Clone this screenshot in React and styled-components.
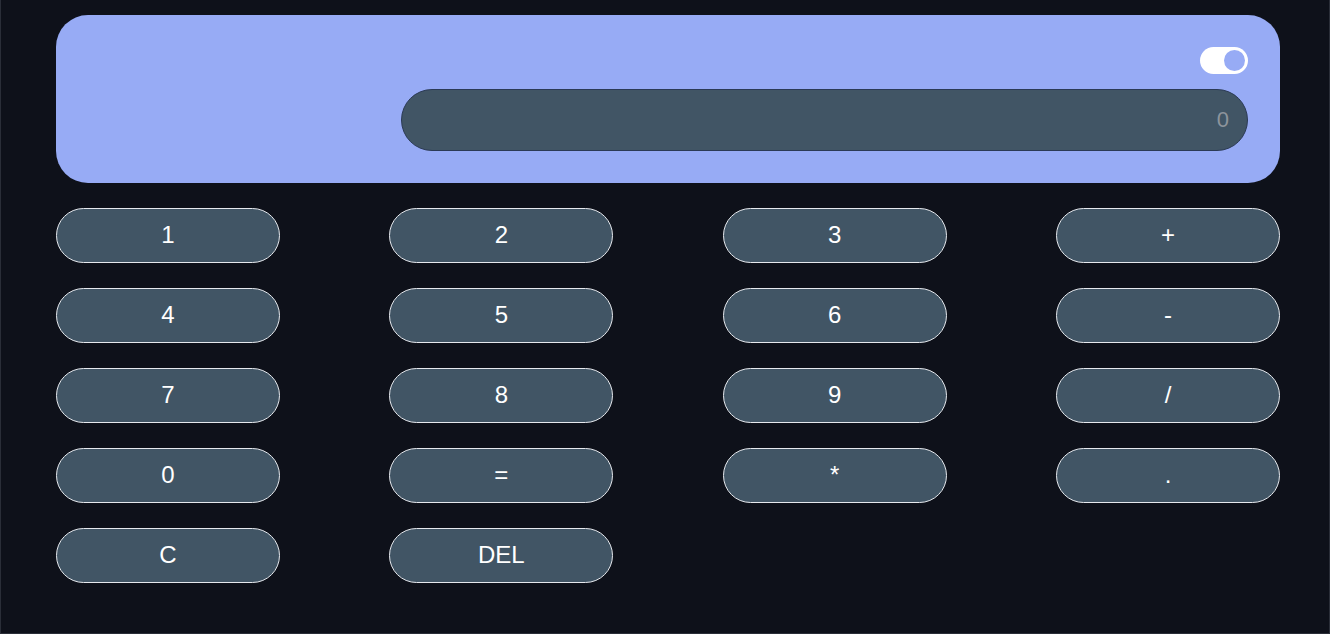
import styled, { createGlobalStyle } from "styled-components"

const GlobalStyle = createGlobalStyle`
    html, body {
        margin: 0;
        padding: 0;
        background: #0e111a;
        font-family: "Liberation Sans", Arial, sans-serif;
    }
`

const Page = styled.div`
    box-sizing: border-box;
    width: 1330px;
    height: 634px;
    padding: 15px 49px 0 55px;
    background: #0e111a;
    border: 1px solid #2a2e38;
    border-top: none;
`

const Calculator = styled.div`
    display: flex;
    flex-direction: column;
    gap: 25px;
    width: 1224px;
`

const Screen = styled.div`
    display: flex;
    flex-direction: column;
    align-items: flex-end;
    gap: 15px;
    box-sizing: border-box;
    height: 168px;
    padding: 32px 32px;
    border-radius: 32px;
    background: #97abf5;
`

const Toggle = styled.div`
    position: relative;
    width: 48px;
    height: 27px;
    border-radius: 14px;
    background: #ffffff;
    cursor: pointer;
`

const Knob = styled.span`
    position: absolute;
    top: 3px;
    right: 3px;
    width: 21px;
    height: 21px;
    border-radius: 50%;
    background: #97abf5;
`

const Display = styled.input`
    box-sizing: border-box;
    width: 847px;
    height: 62px;
    padding: 0 18px;
    border: 1px solid #2b3a55;
    border-radius: 31px;
    background: #415565;
    color: #8d949c;
    font-family: "Liberation Sans", Arial, sans-serif;
    font-size: 22px;
    text-align: right;
    outline: none;

    &::placeholder {
        color: #8d949c;
    }
`

const Keypad = styled.div`
    display: grid;
    grid-template-columns: repeat(4, 224px);
    justify-content: space-between;
    row-gap: 25px;
`

const Key = styled.button`
    box-sizing: border-box;
    height: 55px;
    padding: 0 0 2px;
    border: 1px solid #e6e9ee;
    border-radius: 28px;
    background: #415565;
    color: #ffffff;
    font-family: "Liberation Sans", Arial, sans-serif;
    font-size: 24px;
    cursor: pointer;
`

const keys = ["1", "2", "3", "+", "4", "5", "6", "-", "7", "8", "9", "/", "0", "=", "*", ".", "C", "DEL"]

export default function App() {
    return (
        <>
            <GlobalStyle />
            <Page>
                <Calculator>
                    <Screen>
                        <Toggle>
                            <Knob />
                        </Toggle>
                        <Display readOnly placeholder="0" />
                    </Screen>
                    <Keypad>
                        {keys.map((k) => (
                            <Key key={k}>{k}</Key>
                        ))}
                    </Keypad>
                </Calculator>
            </Page>
        </>
    )
}
